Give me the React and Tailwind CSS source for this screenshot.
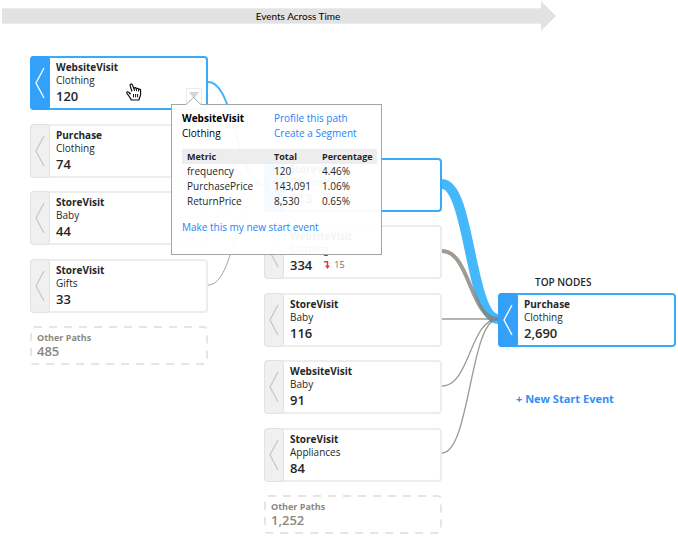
import React from "react";

const columnOne = [
  { name: "WebsiteVisit", detail: "Clothing", count: "120", active: true, popover: true },
  { name: "Purchase", detail: "Clothing", count: "74" },
  { name: "StoreVisit", detail: "Baby", count: "44" },
  { name: "StoreVisit", detail: "Gifts", count: "33" },
];

const columnTwo = [
  { name: "StoreVisit", detail: "Clothing", count: "813", active: true, drop: "53" },
  { name: "WebsiteVisit", detail: "Clothing", count: "334", drop: "15" },
  { name: "StoreVisit", detail: "Baby", count: "116" },
  { name: "WebsiteVisit", detail: "Baby", count: "91" },
  { name: "StoreVisit", detail: "Appliances", count: "84" },
];

const metrics = [
  ["frequency", "120", "4.46%"],
  ["PurchasePrice", "143,091", "1.06%"],
  ["ReturnPrice", "8,530", "0.65%"],
];

function TimeArrow() {
  return (
    <header className="ml-[2px] flex h-8 w-[554px] max-w-full items-center">
      <div className="flex h-4 flex-1 items-center justify-center border-y border-[#ececec] bg-[#e2e2e2] pl-[53px]">
        <h1 className="font-[Lato,sans-serif] text-[10px] leading-4 text-black">Events Across Time</h1>
      </div>
      <svg className="h-[30px] w-[15px]" viewBox="0 0 15 30" aria-hidden="true">
        <path d="M0 0L15 15L0 30Z" fill="#e2e2e2" />
      </svg>
    </header>
  );
}

function DropIcon() {
  return (
    <svg className="h-2 w-[6px]" viewBox="0 0 6 8" aria-hidden="true">
      <path d="M0 .8H3.5V5.5" fill="none" stroke="#e5354b" strokeWidth="1.4" />
      <path d="M1 4.5H6L3.5 8Z" fill="#e5354b" />
    </svg>
  );
}

function HandCursor() {
  return (
    <svg className="absolute top-[25px] left-[94px] h-[18px] w-4" viewBox="0 0 16 18" aria-hidden="true">
      <path
        d="M4.2 9.8V11L2.6 9.1C1.9 8.4.6 8.8.7 9.9C1.1 11 3 13 3.7 14.2C4.1 15.1 5 15.8 5.2 17H13C13 15.2 14.6 13.6 14.6 11.2V7.2C14.6 5.9 12.7 5.9 12.6 7V6.3C12.5 5 10.4 5 10.3 6.2V5.6C10 4.3 8 4.5 8 5.7L6.5 2C6 .6 3.8 1 4.2 2.7L6 8.5"
        fill="#fff"
        stroke="#111"
        strokeWidth="1.2"
        strokeLinejoin="round"
      />
      <path d="M8 5.5L8.6 8M10.3 6L10.6 8.2M12.6 6.8V8.6M7.5 11V14.3M9.6 11V14.3M11.6 11V14.3" fill="none" stroke="#111" strokeWidth="1" />
    </svg>
  );
}

function Popover() {
  return (
    <div
      role="dialog"
      aria-label="WebsiteVisit details"
      className="absolute top-[46px] left-[calc(100%-35px)] z-20 h-[151px] w-[211px] border border-[#a5a5a3] bg-white/95 pt-[6px] pl-[10px] text-[10px] leading-[15px]"
    >
      <svg className="absolute -top-2 left-[14px] h-2 w-4" viewBox="0 0 16 8" aria-hidden="true">
        <path d="M0 7.5L7.5 0L15 7.5V8H0Z" fill="#fff" />
        <path d="M0 7.5L7.5 .5L15 7.5" fill="none" stroke="#a5a5a3" />
      </svg>
      <div className="flex">
        <div className="w-[92px] text-black">
          <p className="font-bold">WebsiteVisit</p>
          <p>Clothing</p>
        </div>
        <div className="flex flex-col text-[#2484fa]">
          <a href="#profile">Profile this path</a>
          <a href="#segment">Create a Segment</a>
        </div>
      </div>
      <table className="mt-2 w-[195px] table-fixed text-left">
        <thead className="bg-[#ededed] text-[9px]">
          <tr>
            <th className="w-[92px] pl-[5px]">Metric</th>
            <th className="w-[48px]">Total</th>
            <th>Percentage</th>
          </tr>
        </thead>
        <tbody>
          {metrics.map(([metric, total, percentage]) => (
            <tr key={metric}>
              <td className="pl-[5px]">{metric}</td>
              <td>{total}</td>
              <td>{percentage}</td>
            </tr>
          ))}
        </tbody>
      </table>
      <a href="#start" className="mt-[11px] block text-[#2484fa]">
        Make this my new start event
      </a>
    </div>
  );
}

function EventNode({ name, detail, count, active, drop, popover }) {
  return (
    <article
      className={`relative flex h-[54px] rounded border-2 ${active ? "border-[#3aabfa]" : "border-[#ededed]"}`}
    >
      <button
        type="button"
        aria-label={`Expand paths before ${name} ${detail}`}
        className={`-my-[2px] -ml-[2px] flex w-5 items-center justify-center rounded ${
          active ? "bg-[#33a1fa] text-white" : "border border-[#e2e2e2] bg-[#f0f0f0] text-[#c8c8c8]"
        }`}
      >
        <svg className="h-8 w-[10px] shrink-0" viewBox="0 0 10 32" aria-hidden="true">
          <path d="M9 1L1 16L9 31" fill="none" stroke="currentColor" strokeWidth="1.3" />
        </svg>
      </button>
      <div className="pt-[3px] pl-[6px] text-[10px] leading-[13px]">
        <h2 className="font-bold">{name}</h2>
        <p>{detail}</p>
        <p className="flex items-center text-[13px] leading-[18px] font-semibold">
          {count}
          {drop && (
            <span className="ml-3 flex items-center gap-1 text-[9px] font-normal text-[#707070]">
              <DropIcon />
              {drop}
            </span>
          )}
        </p>
      </div>
      {popover && (
        <>
          <button
            type="button"
            aria-label="Show details"
            className="absolute right-1 bottom-0 flex h-5 w-4 justify-center border border-[#ebebeb] pt-[3px]"
          >
            <svg className="h-[7px] w-[10px]" viewBox="0 0 10 7" aria-hidden="true">
              <path d="M0 0H10L5 7Z" fill="#d6d6d6" />
            </svg>
          </button>
          <HandCursor />
          <Popover />
        </>
      )}
    </article>
  );
}

function OtherPaths({ count }) {
  return (
    <article className="relative h-[39px] pt-[5px] pl-[7px] text-[#8a8881]">
      <svg className="absolute inset-0 h-full w-full" aria-hidden="true">
        <rect
          className="h-[calc(100%-2px)] w-[calc(100%-2px)]"
          x="1"
          y="1"
          rx="3"
          fill="none"
          stroke="#e6e6e1"
          strokeWidth="2"
          strokeDasharray="8 7"
        />
      </svg>
      <h2 className="text-[9px] leading-[13px] font-bold">Other Paths</h2>
      <p className="text-[13px] leading-[15px] font-semibold">{count}</p>
    </article>
  );
}

export default function App() {
  return (
    <main className="bg-white font-['Open_Sans',sans-serif] text-[#262626]">
      <TimeArrow />
      <div className="flex pr-[2px] pb-1 pl-[30px]">
        <section className="mt-6 flex h-[309px] min-w-0 flex-1 flex-col justify-between">
          {columnOne.map((node) => (
            <EventNode key={node.name + node.detail} {...node} />
          ))}
          <OtherPaths count="485" />
        </section>

        <svg className="h-[502px] w-14 shrink-0" viewBox="0 0 56 502" fill="none" aria-hidden="true">
          <path d="M0 118C28 118 28 153 56 153M0 186C28 186 28 153 56 153M0 253C28 253 28 153 56 153" stroke="#a3a29e" />
          <path d="M0 50C28 50 28 153 56 153" stroke="#44b4fa" strokeWidth="2" />
        </svg>

        <section className="mt-[126px] flex h-[376px] min-w-0 flex-1 flex-col justify-between">
          {columnTwo.map((node) => (
            <EventNode key={node.name + node.detail} {...node} />
          ))}
          <OtherPaths count="1,252" />
        </section>

        <svg className="h-[502px] w-14 shrink-0" viewBox="0 0 56 502" fill="none" aria-hidden="true">
          <path d="M0 152C28 152 28 287 56 287" stroke="#44b8fb" strokeWidth="10" />
          <g stroke="#85827a" strokeOpacity="0.8">
            <path d="M0 219C28 219 28 287 56 287" strokeWidth="4" />
            <path d="M0 287H56M0 354C28 354 28 287 56 287M0 421C28 421 28 287 56 287" strokeWidth="1.3" />
          </g>
        </svg>

        <section className="mt-[242px] min-w-0 flex-1">
          <h2 className="mb-[3px] pl-[37px] text-[10px] leading-4 font-semibold">TOP NODES</h2>
          <EventNode name="Purchase" detail="Clothing" count="2,690" active />
          <button type="button" className="mt-11 ml-[18px] text-[11px] leading-4 font-bold text-[#2f90fa]">
            + New Start Event
          </button>
        </section>
      </div>
    </main>
  );
}
